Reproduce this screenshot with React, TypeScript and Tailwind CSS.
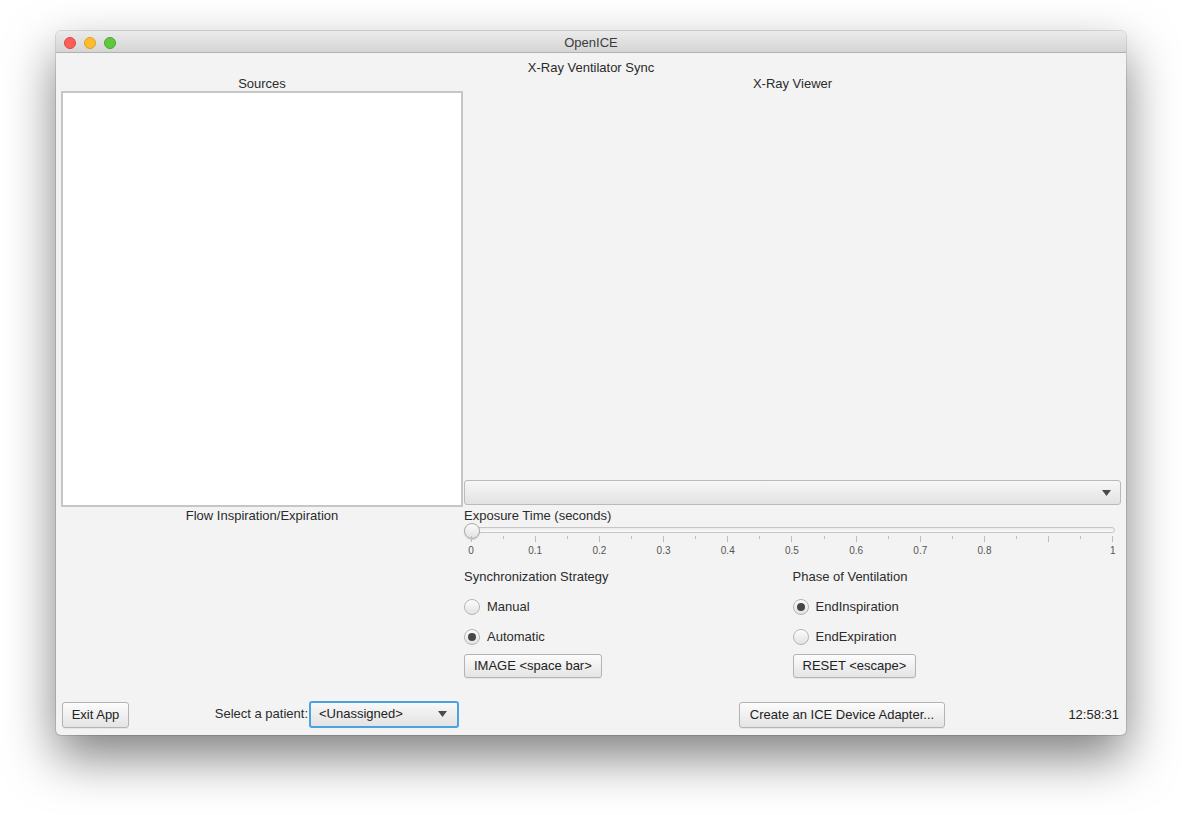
import React from 'react';

const font = { fontFamily: '"Liberation Sans", Arial, sans-serif' };

const tickLabels = ['0', '0.1', '0.2', '0.3', '0.4', '0.5', '0.6', '0.7', '0.8', '', '1'];

function Arrow() {
  return (
    <svg width="9" height="6" viewBox="0 0 9 6" className="shrink-0">
      <path d="M0 0 H9 L4.5 6 Z" fill="#4a4a4a" />
    </svg>
  );
}

function Radio({ checked, label }: { checked?: boolean; label: string }) {
  return (
    <div className="flex items-center h-4 gap-[7px]">
      <div className="w-4 h-4 rounded-full border border-[#b4b4b4] bg-gradient-to-b from-[#fbfbfb] to-[#e3e3e3] flex items-center justify-center shadow-[inset_0_1px_0_#fff]">
        {checked && <div className="w-[8px] h-[8px] rounded-full bg-[#474747]" />}
      </div>
      <span className="text-[13px] text-[#2b2b2b] leading-[20px]">{label}</span>
    </div>
  );
}

function Button({ children, className = '' }: { children: React.ReactNode; className?: string }) {
  return (
    <div
      className={`flex items-center whitespace-nowrap rounded-[3px] border border-[#b3b3b3] bg-gradient-to-b from-[#fcfcfc] to-[#e4e4e4] text-[13px] text-[#222] shadow-[0_1px_0_rgba(0,0,0,0.05)] ${className}`}
    >
      {children}
    </div>
  );
}

function Slider() {
  return (
    <div className="relative h-[34px] w-[657px]">
      {/* track */}
      <div className="absolute left-[3px] right-[6px] top-[4px] h-[6px] rounded-full border border-[#c6c6c6] bg-gradient-to-b from-[#ececec] to-[#fafafa]" />
      {/* thumb */}
      <div className="absolute left-0 top-0 w-4 h-4 rounded-full border border-[#a9a9a9] bg-gradient-to-b from-[#fdfdfd] to-[#e1e1e1] shadow-[0_1px_1px_rgba(0,0,0,0.15)]" />
      {/* ticks */}
      <div className="absolute left-[7px] w-[642px] top-[13px] h-[6px] flex justify-between items-start">
        {Array.from({ length: 21 }).map((_, i) => (
          <div key={i} className={`w-px bg-[#bdbdbd] ${i % 2 === 0 ? 'h-[6px]' : 'h-[3px]'}`} />
        ))}
      </div>
      <div className="absolute left-[7px] w-[642px] top-[21px] flex justify-between">
        {tickLabels.map((t, i) => (
          <div key={i} className="w-0 flex justify-center">
            <span className="text-[10px] leading-[14px] text-[#555] whitespace-nowrap">{t}</span>
          </div>
        ))}
      </div>
    </div>
  );
}

export default function App() {
  return (
    <div className="w-[1182px] h-[815px] bg-white pt-[31px] pl-[56px] overflow-hidden" style={font}>
      <div className="w-[1070px] h-[704px] flex flex-col bg-[#f3f3f3] rounded-[5px] shadow-[0_22px_50px_rgba(0,0,0,0.5),0_0_0_1px_rgba(0,0,0,0.12)] overflow-hidden">
        {/* title bar */}
        <div className="relative h-[22px] shrink-0 flex items-center pt-[2px] pl-[8px] gap-[8px] bg-gradient-to-b from-[#ebebeb] to-[#d5d5d5] border-b border-[#b1b1b1]">
          <div className="w-3 h-3 rounded-full bg-[#fc5f57] border border-[#de4640]" />
          <div className="w-3 h-3 rounded-full bg-[#fdbc2e] border border-[#dea123]" />
          <div className="w-3 h-3 rounded-full bg-[#5fc83f] border border-[#4ba62e]" />
          <div className="absolute inset-0 pt-[2px] flex items-center justify-center text-[13px] text-[#3c3c3c]">OpenICE</div>
        </div>

        {/* content */}
        <div className="flex-1 flex flex-col pt-[6px] text-[#2b2b2b] text-[13px]">
          <div className="h-4 leading-[18px] text-center">X-Ray Ventilator Sync</div>

          <div className="flex pl-[5px] pr-[5px] gap-px">
            {/* left column */}
            <div className="w-[402px] flex flex-col">
              <div className="h-4 leading-[18px] text-center">Sources</div>
              <div className="h-[416px] bg-white border-2 border-[#c6c6c6]" />
              <div className="h-4 leading-[18px] text-center">Flow Inspiration/Expiration</div>
            </div>

            {/* right column */}
            <div className="w-[657px] flex flex-col">
              <div className="h-4 leading-[18px] text-center">X-Ray Viewer</div>
              <div className="h-[389px]" />
              <div className="h-[25px] flex items-center justify-end pr-[9px] rounded-[3px] border border-[#bababa] bg-gradient-to-b from-[#f7f7f7] to-[#e2e2e2]">
                <Arrow />
              </div>
              <div className="h-px" />
              <div className="h-[17px] leading-[20px]">Exposure Time (seconds)</div>
              <Slider />

              <div className="grid grid-cols-2 mt-[10px]">
                <div className="flex flex-col">
                  <div className="h-4 leading-[20px]">Synchronization Strategy</div>
                  <div className="mt-[16px] flex flex-col gap-[14px]">
                    <Radio label="Manual" />
                    <Radio label="Automatic" checked />
                  </div>
                  <Button className="mt-[9px] h-6 px-[9px] self-start">IMAGE &lt;space bar&gt;</Button>
                </div>
                <div className="flex flex-col">
                  <div className="h-4 leading-[20px]">Phase of Ventilation</div>
                  <div className="mt-[16px] flex flex-col gap-[14px]">
                    <Radio label="EndInspiration" checked />
                    <Radio label="EndExpiration" />
                  </div>
                  <Button className="mt-[9px] h-6 px-[9px] self-start">RESET &lt;escape&gt;</Button>
                </div>
              </div>
            </div>
          </div>

          <div className="flex-1" />

          {/* bottom bar */}
          <div className="h-[28px] mb-[7px] flex items-center pl-[6px] pr-[7px]">
            <Button className="h-[26px] w-[67px] mt-[2px] justify-center">Exit App</Button>
            <span className="ml-[84px] w-[95px] text-right leading-[20px] text-[13px] text-[#2b2b2b] whitespace-nowrap">Select a patient:</span>
            <div className="ml-px w-[150px] h-[27px] flex items-center justify-between pl-[8px] pr-[10px] rounded-[3px] border-2 border-[#4aa3df] bg-gradient-to-b from-[#f8f8f8] to-[#e3e3e3]">
              <span className="text-[13px] text-[#222]">&lt;Unassigned&gt;</span>
              <Arrow />
            </div>
            <Button className="ml-[280px] h-[26px] w-[206px] mt-[2px] justify-center">Create an ICE Device Adapter...</Button>
            <span className="ml-auto text-[13px] text-[#222] mt-[2px]">12:58:31</span>
          </div>
        </div>
      </div>
    </div>
  );
}
